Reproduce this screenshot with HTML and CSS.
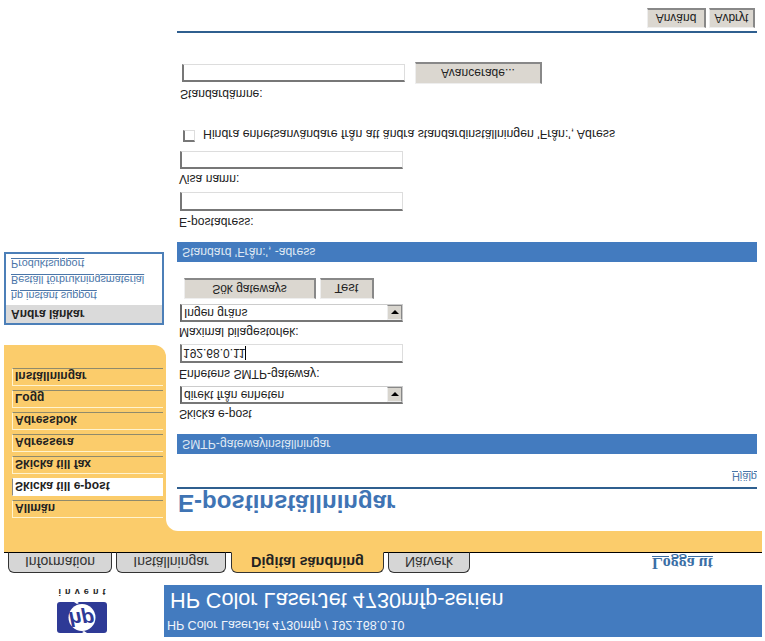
FILE: index.html
```html
<!DOCTYPE html>
<html lang="sv">
<head>
<meta charset="utf-8">
<title>E-postinställningar</title>
<link rel="stylesheet" href="styles.css">
</head>
<body>
<div class="page">
  <header class="header">
    <div class="logo">
      <svg class="logo-svg" width="50" height="48" viewBox="0 0 50 48">
        <rect x="0" y="0" width="50" height="31" rx="3" fill="#2e3a96"/>
        <circle cx="25" cy="15.5" r="13.5" fill="#fff"/>
        <text class="logo-hp" x="24.5" y="21" text-anchor="middle">hp</text>
        <path d="M27 2 L30 0 L28 -1 L25 1 Z M20 29 L17 31 L19 32 L22 30 Z" fill="#fff"/>
        <text class="logo-invent" x="25" y="44" text-anchor="middle" textLength="47">invent</text>
      </svg>
    </div>
    <div class="banner">
      <div class="banner-sub">HP Color LaserJet 4730mfp / 192.168.0.10</div>
      <div class="banner-title">HP Color LaserJet 4730mfp-serien</div>
    </div>
  </header>

  <nav class="tabs">
    <a class="tab tab-a">Information</a>
    <a class="tab tab-b">Inställningar</a>
    <a class="tab tab-c tab-active">Digital sändning</a>
    <a class="tab tab-d">Nätverk</a>
    <a class="logout">Logga ut</a>
  </nav>

  <div class="band"></div>

  <div class="layout">
    <aside class="side">
      <ul class="sidenav">
        <li class="nav-item">Allmän</li>
        <li class="nav-item nav-active">Skicka till e-post</li>
        <li class="nav-item">Skicka till fax</li>
        <li class="nav-item">Adressera</li>
        <li class="nav-item">Adressbok</li>
        <li class="nav-item">Logg</li>
        <li class="nav-item">Inställningar</li>
      </ul>
      <div class="links">
        <div class="links-head">Andra länkar</div>
        <a class="link-row">hp instant support</a>
        <a class="link-row">Beställ förbrukningsmaterial</a>
        <a class="link-row">Produktsupport</a>
      </div>
    </aside>

    <main class="content">
      <h1 class="title">E-postinställningar</h1>
      <div class="help-row"><a class="help">Hjälp</a></div>

      <div class="section">SMTP-gatewayinställningar</div>

      <label class="label label-1">Skicka e-post</label>
      <div class="select-box"><span class="select-val">direkt från enheten</span><span class="arrow"></span></div>

      <label class="label label-2">Enhetens SMTP-gateway:</label>
      <div class="input-wrap"><input class="input input-tall input-ip" type="text" value="192.68.0.11"><span class="caret"></span></div>

      <label class="label label-3">Maximal bilagestorlek:</label>
      <div class="select-box"><span class="select-val">Ingen gräns</span><span class="arrow"></span></div>

      <div class="btn-row">
        <button class="btn btn-search">Sök gateways</button>
        <button class="btn btn-test">Test</button>
      </div>

      <div class="section section-2">Standard 'Från:', -adress</div>

      <label class="label label-4">E-postadress:</label>
      <input class="input input-tall" type="text">

      <label class="label label-5">Visa namn:</label>
      <input class="input" type="text">

      <div class="check-row">
        <input class="check" type="checkbox">
        <span class="check-label">Hindra enhetsanvändare från att ändra standardinställningen 'Från:', Adress</span>
      </div>

      <label class="label label-6">Standardämne:</label>
      <div class="subject-row">
        <input class="input input-subject" type="text">
        <button class="btn btn-adv">Avancerade...</button>
      </div>

      <div class="rule-bottom"></div>
      <div class="actions">
        <button class="btn btn-apply">Använd</button>
        <button class="btn btn-cancel">Avbryt</button>
      </div>
    </main>
  </div>
</div>
</body>
</html>
```
FILE: styles.css
```css
* { box-sizing: border-box; }
html, body { margin: 0; padding: 0; background: #fff; }
body { width: 765px; height: 641px; overflow: hidden; font-family: "Liberation Sans", Arial, sans-serif; font-size: 12px; color: #222; }
.page { width: 765px; height: 641px; transform: scaleY(-1); overflow: hidden; background: #fff; }

.header { display: flex; padding-top: 4px; height: 56px; }
.logo { width: 164px; padding: 4px 0 0 57px; }
.logo-svg { display: block; overflow: visible; }
.logo-hp { font: italic bold 21px "Liberation Sans", sans-serif; fill: #2e3a96; }
.logo-invent { font: bold 9px "Liberation Sans", sans-serif; fill: #222; }
.banner { width: 598px; height: 52px; background: #437bbf; color: #fff; padding: 4px 0 0 3px; }
.banner-sub { font-size: 12.5px; line-height: 16px; color: #f0f4fa; }
.banner-title { font-size: 21.7px; line-height: 28px; padding-left: 3px; margin-top: 3px; }

.tabs { display: flex; height: 21px; margin: 12px 3px 0 4px; border-bottom: 1px solid #000; padding-left: 4px; align-items: flex-end; position: relative; }
.tab { display: block; height: 21px; margin-bottom: -1px; background: #d6d6d6; border: 1px solid #333; border-bottom: 1px solid #000; border-radius: 6px 6px 0 0; text-align: center; line-height: 20px; font-size: 14px; color: #333; }
.tab-a { width: 104px; }
.tab-b { width: 110px; margin-left: 4px; }
.tab-c { width: 153px; margin-left: 5px; }
.tab-d { width: 82px; margin-left: 4px; }
.tab-active { background: #fbcc6b; border-bottom-color: #fbcc6b; font-weight: bold; font-size: 14.5px; color: #222; }
.logout { margin-left: 182px; align-self: center; font-family: "Liberation Serif", serif; font-weight: bold; font-size: 16px; line-height: 18px; color: #3a6ea5; text-decoration: underline; }

.band { height: 21px; margin: 0 3px 0 4px; background: #fbcc6b; }

.layout { display: flex; margin: 0 3px 0 4px; height: 531px; background: linear-gradient(#fbcc6b, #fbcc6b) no-repeat 0 0 / 180px 40px; }
.side { width: 162px; flex: none; }
.sidenav { list-style: none; margin: 0; padding: 13px 0 24px 8px; height: 186px; background: #fbcc6b; border-bottom-right-radius: 12px; display: flex; flex-direction: column; gap: 4px; }
.nav-item { height: 18px; width: 151px; border-top: 1px solid #fff3cf; border-left: 1px solid #fff3cf; border-bottom: 1px solid #8f8a6c; font-weight: bold; font-size: 12px; line-height: 18px; padding-left: 2px; color: #222; }
.nav-active { background: #fff; border-left-color: #888; border-top-color: #fff; border-bottom-color: #fff; }
.links { width: 160px; height: 73px; margin-top: 20px; border: 2px solid #4c7fb8; background: #fff; }
.links-head { height: 18px; background: #dadada; font-weight: bold; font-size: 12px; line-height: 19px; padding-left: 5px; color: #222; }
.link-row { display: block; height: 16px; font-size: 10.8px; line-height: 18px; padding-left: 5px; color: #4a75a8; text-decoration: underline; }

.content { flex: 1; background: #fff; border-top-left-radius: 12px; padding: 12px 5px 0 11px; margin-left: 0; }
.title { margin: 0; height: 30px; font-size: 24px; line-height: 32px; font-weight: bold; color: #3f74b4; padding-left: 1px; }
.help-row { height: 35px; border-top: 2px solid #2f5f8f; text-align: right; padding-top: 3px; }
.help { font-size: 11px; color: #4a75a8; text-decoration: underline; }
.section { height: 20px; background: #437bbf; color: #dfe8f3; font-size: 12.2px; line-height: 21px; padding-left: 5px; }
.section-2 { margin-top: 16px; }
.label { display: block; height: 18px; line-height: 16px; margin-left: 2px; font-size: 12.1px; color: #222; }
.label-1 { margin-top: 12px; }
.label-2 { margin-top: 4px; height: 19px; }
.label-3 { margin-top: 4px; }
.label-4 { margin-top: 12px; height: 19px; }
.label-5 { margin-top: 5px; }
.label-6 { margin-top: 26px; margin-left: 3px; }
.select-box { display: flex; align-items: stretch; width: 223px; height: 18px; margin-left: 3px; background: #fff; border: 1px solid #777; border-left-color: #666; border-top-width: 2px; border-left-width: 2px; border-right-color: #ccc; border-bottom-color: #ccc; }
.select-val { flex: 1; font-size: 12px; line-height: 15px; padding-left: 2px; color: #222; }
.arrow { width: 15px; background: #d8d5ce; border: 1px solid #888; border-top-color: #eee; border-left-color: #eee; position: relative; }
.arrow::after { content: ""; position: absolute; left: 3px; top: 5px; border: 4px solid transparent; border-top: 4px solid #000; border-bottom: 0; }
.input { display: block; width: 223px; height: 18px; margin: 0 0 0 3px; padding: 0 3px; background: #fff; border-style: solid; border-width: 2px 1px 1px 2px; border-color: #777 #ddd #ddd #777; font: 12px "Liberation Sans", sans-serif; color: #222; outline: none; }
.input-tall { height: 19px; }
.input-ip { padding-left: 1px; }
.input-wrap { position: relative; }
.caret { position: absolute; left: 68px; top: 3px; width: 1px; height: 14px; background: #000; }
.btn-row { display: flex; gap: 4px; margin: 5px 0 0 7px; }
.btn { display: block; background: #dbd7d0; border-style: solid; border-width: 1px 2px 2px 1px; border-color: #eee #888 #888 #eee; font: 12px "Liberation Sans", sans-serif; color: #222; padding: 0; }
.btn-search { width: 132px; height: 21px; }
.btn-test { width: 54px; height: 21px; font-size: 13px; }
.check-row { display: flex; align-items: center; height: 16px; margin-top: 7px; margin-left: 6px; }
.check { appearance: none; width: 12px; height: 12px; margin: 0 8px 0 0; background: #fff; border-style: solid; border-width: 2px 1px 1px 2px; border-color: #777 #ddd #ddd #777; }
.check-label { font-size: 12.3px; white-space: nowrap; color: #222; margin-top: 4px; }
.subject-row { display: flex; align-items: center; height: 22px; margin-left: 2px; gap: 10px; }
.input-subject { margin-left: 3px; }
.btn-adv { width: 127px; height: 22px; }
.rule-bottom { height: 2px; background: #2f5f8f; margin-top: 29px; }
.actions { display: flex; justify-content: flex-end; gap: 3px; margin-top: 3px; padding-right: 2px; }
.btn-apply { width: 59px; height: 20px; }
.btn-cancel { width: 46px; height: 20px; }
```
